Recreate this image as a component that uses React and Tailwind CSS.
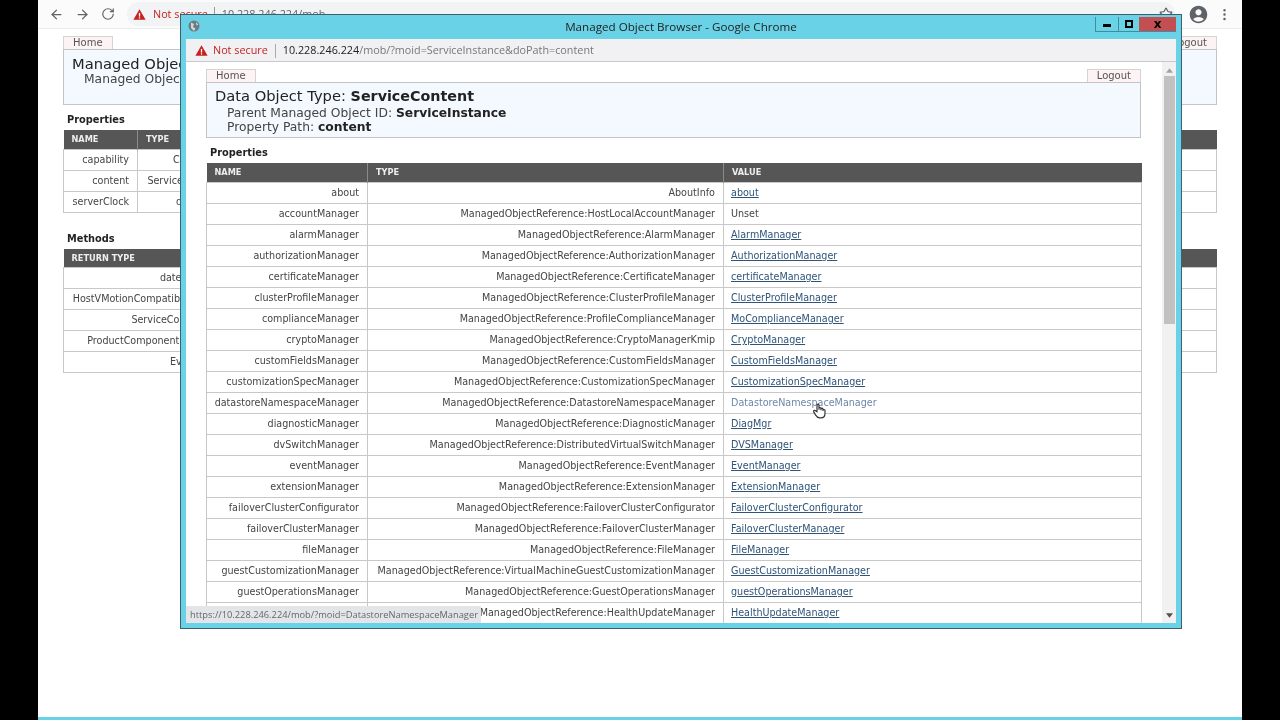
import React from "react";
import { ArrowLeft, ArrowRight, RotateCw, Star, EllipsisVertical } from "lucide-react";
import { MdAccountCircle } from "react-icons/md";

const font = { fontFamily: '"DejaVu Sans", Verdana, sans-serif' };
const openSans = { fontFamily: '"Open Sans", sans-serif' };

const rows = [
  ["about", "AboutInfo", "about"],
  ["accountManager", "ManagedObjectReference:HostLocalAccountManager", null],
  ["alarmManager", "ManagedObjectReference:AlarmManager", "AlarmManager"],
  ["authorizationManager", "ManagedObjectReference:AuthorizationManager", "AuthorizationManager"],
  ["certificateManager", "ManagedObjectReference:CertificateManager", "certificateManager"],
  ["clusterProfileManager", "ManagedObjectReference:ClusterProfileManager", "ClusterProfileManager"],
  ["complianceManager", "ManagedObjectReference:ProfileComplianceManager", "MoComplianceManager"],
  ["cryptoManager", "ManagedObjectReference:CryptoManagerKmip", "CryptoManager"],
  ["customFieldsManager", "ManagedObjectReference:CustomFieldsManager", "CustomFieldsManager"],
  ["customizationSpecManager", "ManagedObjectReference:CustomizationSpecManager", "CustomizationSpecManager"],
  ["datastoreNamespaceManager", "ManagedObjectReference:DatastoreNamespaceManager", "DatastoreNamespaceManager"],
  ["diagnosticManager", "ManagedObjectReference:DiagnosticManager", "DiagMgr"],
  ["dvSwitchManager", "ManagedObjectReference:DistributedVirtualSwitchManager", "DVSManager"],
  ["eventManager", "ManagedObjectReference:EventManager", "EventManager"],
  ["extensionManager", "ManagedObjectReference:ExtensionManager", "ExtensionManager"],
  ["failoverClusterConfigurator", "ManagedObjectReference:FailoverClusterConfigurator", "FailoverClusterConfigurator"],
  ["failoverClusterManager", "ManagedObjectReference:FailoverClusterManager", "FailoverClusterManager"],
  ["fileManager", "ManagedObjectReference:FileManager", "FileManager"],
  ["guestCustomizationManager", "ManagedObjectReference:VirtualMachineGuestCustomizationManager", "GuestCustomizationManager"],
  ["guestOperationsManager", "ManagedObjectReference:GuestOperationsManager", "guestOperationsManager"],
  ["healthUpdateManager", "ManagedObjectReference:HealthUpdateManager", "HealthUpdateManager"],
];

function Warning({ className }) {
  return (
    <svg viewBox="0 0 16 16" className={className}>
      <path d="M8 1.500 15.500 14.500H.5Z" fill="#c5221f" />
      <rect x="7.200" y="6" width="1.600" height="4.600" fill="#fff" />
      <rect x="7.200" y="11.400" width="1.600" height="1.600" fill="#fff" />
    </svg>
  );
}

function Tab({ children }) {
  return (
    <div className="h-[13px] px-[9px] border border-b-0 border-[#d4d4d4] bg-[#fdf3f5] text-[10px] leading-[12px] text-[#555]">
      {children}
    </div>
  );
}

function HeadCell({ children }) {
  return (
    <th className="px-[8px] text-left text-[8.2px] font-bold text-[#eeeeee] border-r border-[#8a8a8a] last:border-r-0">
      {children}
    </th>
  );
}

function BackgroundPage() {
  return (
    <div className="h-full flex flex-col">
      <div className="h-[29px] shrink-0 flex items-center bg-[#fbfbfc] border-b border-[#ececec]">
        <div className="w-[89px] pl-[11px] flex items-center gap-[11px] text-[#5f6368] shrink-0">
          <ArrowLeft size={15} strokeWidth={2} />
          <ArrowRight size={15} strokeWidth={2} />
          <RotateCw size={14} strokeWidth={2} />
        </div>
        <div className="w-[1048px] h-[24px] rounded-full bg-[#f1f3f4] flex items-center pl-[6px] text-[10.8px] shrink-0" style={openSans}>
          <Warning className="w-[13px] h-[13px]" />
          <span className="ml-[7px] text-[#c5221f]">Not secure</span>
          <span className="ml-[6px] w-px h-[14px] bg-[#999]"></span>
          <span className="ml-[7px] text-[#5f6368]">10.228.246.224/mob</span>
        </div>
        <div className="flex items-center text-[#5f6368]">
          <Star size={14} className="-ml-[16px]" />
          <MdAccountCircle size={21} className="ml-[15px]" />
          <EllipsisVertical size={15} className="ml-[8px]" />
        </div>
      </div>

      <div className="flex-1 bg-white px-[25px] pt-[7px] text-[#444]">
        <div className="flex justify-between">
          <Tab>Home</Tab>
          <Tab>Logout</Tab>
        </div>
        <div className="h-[56px] border border-[#c4c4c4] bg-[#f3f9fe] pl-[8px] pt-[4px]">
          <div className="text-[14.7px] leading-[19px] text-[#222]">Managed Object Type: ManagedObjectReference:ServiceInstance</div>
          <div className="pl-[12px] text-[12.300px] leading-[13px]">Managed Object ID: ServiceInstance</div>
        </div>
        <h2 className="mt-[8px] ml-[4px] text-[9.8px] leading-[14px] font-bold text-[#222]">Properties</h2>
        <table className="mt-[3px] w-full table-fixed border-collapse text-[9.6px]">
          <colgroup>
            <col className="w-[74px]" />
            <col className="w-[92px]" />
            <col />
          </colgroup>
          <thead className="bg-[#565656]">
            <tr className="h-[19px]">
              <HeadCell>NAME</HeadCell>
              <HeadCell>TYPE</HeadCell>
              <HeadCell>VALUE</HeadCell>
            </tr>
          </thead>
          <tbody>
            {[["capability", "Capability"], ["content", "ServiceContent"], ["serverClock", "dateTime"]].map(([a, b]) => (
              <tr key={a} className="h-[21px] border border-[#c8c8c8]">
                <td className="text-right pr-[8px] pt-[1px] border-r border-[#c8c8c8]">{a}</td>
                <td className="text-right pr-[8px] pt-[1px] border-r border-[#c8c8c8]">{b}</td>
                <td></td>
              </tr>
            ))}
          </tbody>
        </table>
        <h2 className="mt-[19px] ml-[4px] text-[9.8px] leading-[14px] font-bold text-[#222]">Methods</h2>
        <table className="mt-[3px] w-full table-fixed border-collapse text-[9.6px]">
          <colgroup>
            <col className="w-[150px]" />
            <col />
          </colgroup>
          <thead className="bg-[#565656]">
            <tr className="h-[19px]">
              <HeadCell>RETURN TYPE</HeadCell>
              <HeadCell>NAME</HeadCell>
            </tr>
          </thead>
          <tbody>
            {["dateTime", "HostVMotionCompatibility[]", "ServiceContent", "ProductComponentInfo[]", "Event[]"].map((a) => (
              <tr key={a} className="h-[21px] border border-[#c8c8c8]">
                <td className="text-right pr-[8px] border-r border-[#c8c8c8] whitespace-nowrap">{a}</td>
                <td></td>
              </tr>
            ))}
          </tbody>
        </table>
      </div>
    </div>
  );
}

function Browser() {
  return (
    <div className="absolute left-[142px] top-[14px] w-[1002px] h-[615px] border border-[#3f5f6c] bg-[#69d2e7] flex flex-col px-[5px] pb-[5px] overflow-hidden">
      <div className="h-[24px] shrink-0 relative flex items-center justify-center text-[11.65px] text-[#222]" style={openSans}>
        <svg viewBox="0 0 12 12" className="absolute left-[2px] top-[5px] w-[12px] h-[12px]">
          <circle cx="6" cy="6" r="5.500" fill="#6d7b82" />
          <path d="M3 2.500 6 4 5 7 7.500 8.500 6 11 3 8Z M8 2 10.500 4.500 8.500 5.500Z" fill="#cfd8dc" />
        </svg>
        <span>Managed Object Browser - Google Chrome</span>
        <div className="absolute right-0 top-[2px] flex h-[15px] border-b border-[#3f8ea0]">
          <div className="w-[23px] border-l border-[#3f8ea0] flex items-center justify-center">
            <span className="w-[8px] h-[3px] mt-[3px] bg-black"></span>
          </div>
          <div className="w-[21px] border-l border-[#3f8ea0] flex items-center justify-center">
            <span className="w-[8px] h-[8px] border-2 border-black"></span>
          </div>
          <div className="w-[37px] bg-[#c44f52] flex items-center justify-center text-[12px] font-bold text-black leading-none" style={font}>x</div>
        </div>
      </div>

      <div className="h-[23px] shrink-0 flex items-center bg-[#f1f1f3] border-b border-[#c9c9c9] pl-[9px] pt-[1px] text-[10.8px]" style={openSans}>
        <Warning className="w-[13px] h-[13px]" />
        <span className="ml-[5px] text-[#c5221f]">Not secure</span>
        <span className="ml-[7px] w-px h-[14px] bg-[#aaa]"></span>
        <span className="ml-[7px] text-[#222]">10.228.246.224</span>
        <span className="text-[#777]">/mob/?moid=ServiceInstance&amp;doPath=content</span>
      </div>

      <div className="flex-1 min-h-0 flex bg-white relative">
        <div className="flex-1 min-w-0 pl-[20px] pr-[21px] pt-[7px] overflow-hidden text-[#444]">
          <div className="flex justify-between">
            <Tab>Home</Tab>
            <Tab>Logout</Tab>
          </div>
          <div className="h-[56px] border border-[#c4c4c4] bg-[#f3f9fe] pl-[8px] pt-[3px]">
            <div className="text-[14.7px] leading-[19px] text-[#222]">Data Object Type: <b className="text-[14.300px]">ServiceContent</b></div>
            <div className="pl-[12px] text-[12.300px] leading-[14px] text-[#444]">Parent Managed Object ID: <b className="text-[#222]">ServiceInstance</b></div>
            <div className="pl-[12px] text-[12.300px] leading-[15px] text-[#444]">Property Path: <b className="text-[#222]">content</b></div>
          </div>
          <h2 className="mt-[8px] ml-[4px] text-[9.8px] leading-[14px] font-bold text-[#222]">Properties</h2>
          <table className="mt-[3px] w-[935px] table-fixed border-collapse text-[9.6px]">
            <colgroup>
              <col className="w-[161px]" />
              <col className="w-[356px]" />
              <col className="w-[418px]" />
            </colgroup>
            <thead className="bg-[#565656]">
              <tr className="h-[19px]">
                <HeadCell>NAME</HeadCell>
                <HeadCell>TYPE</HeadCell>
                <HeadCell>VALUE</HeadCell>
              </tr>
            </thead>
            <tbody>
              {rows.map(([name, type, value]) => (
                <tr key={name} className="h-[21px] border border-[#c8c8c8]">
                  <td className="text-right pr-[8px] pt-[1px] border-r border-[#c8c8c8] whitespace-nowrap">{name}</td>
                  <td className="text-right pr-[8px] pt-[1px] border-r border-[#c8c8c8] whitespace-nowrap">{type}</td>
                  <td className="pl-[7px] pt-[1px]">
                    {value === null ? (
                      "Unset"
                    ) : value === "DatastoreNamespaceManager" ? (
                      <span className="text-[#6f86ab]">{value}</span>
                    ) : (
                      <span className="text-[#2f5478] underline">{value}</span>
                    )}
                  </td>
                </tr>
              ))}
            </tbody>
          </table>
        </div>

        <div className="w-[14px] shrink-0 bg-[#f1f1f1] flex flex-col items-center">
          <svg viewBox="0 0 8 5" className="w-[7px] h-[5px] mt-[6px] mb-[3px]"><path d="M4 0 8 5H0Z" fill="#a3a3a3" /></svg>
          <div className="w-[11px] h-[248px] bg-[#c1c1c1]"></div>
          <div className="flex-1"></div>
          <svg viewBox="0 0 8 5" className="w-[7px] h-[5px] mb-[5px]"><path d="M0 0H8L4 5Z" fill="#505050" /></svg>
        </div>

        <div className="absolute left-0 bottom-0 h-[17px] w-[295px] bg-[#e3e5e8] pl-[4px] text-[9.3px] leading-[17px] text-[#666] whitespace-nowrap overflow-hidden" style={openSans}>
          https://10.228.246.224/mob/?moid=DatastoreNamespaceManager
        </div>

        <svg viewBox="0 0 24 24" className="absolute left-[625px] top-[340px] w-[16px] h-[17px]" fill="#fff" stroke="#333" strokeWidth="1.800" strokeLinejoin="round">
          <path d="M9 11V4a1.500 1.500 0 0 1 3 0v6 -1a1.500 1.500 0 0 1 3 0v2 -1a1.500 1.500 0 0 1 3 0v2a1.500 1.500 0 0 1 3 0v4c0 4-2 7-6 7h-2c-3 0-4.500-1.500-6-4l-3-5c-.8-1.500 1.500-2.800 2.700-1.500L9 14Z" />
        </svg>
      </div>
    </div>
  );
}

export default function App() {
  return (
    <div className="w-[1280px] h-[720px] bg-black overflow-hidden blur-[0.3px]" style={font}>
      <div className="mx-auto w-[1204px] h-full relative flex flex-col">
        <div className="flex-1 min-h-0">
          <BackgroundPage />
        </div>
        <div className="h-[3px] shrink-0 bg-[#69d2e7]"></div>
        <Browser />
      </div>
    </div>
  );
}
